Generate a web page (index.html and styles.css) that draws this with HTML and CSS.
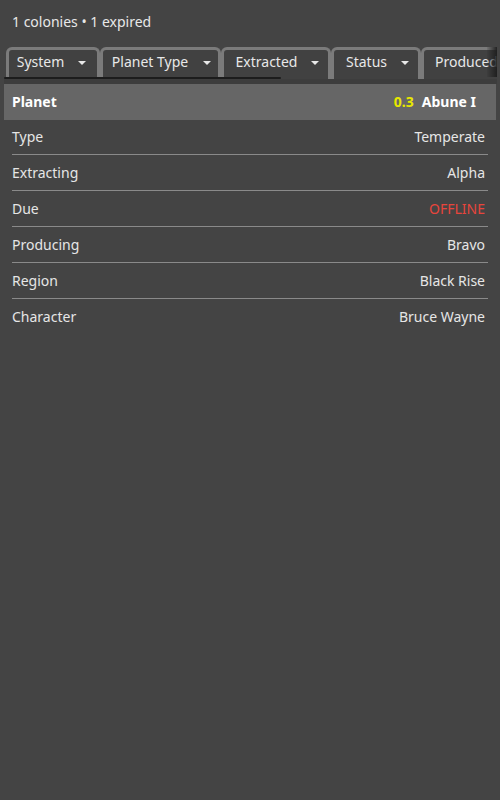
FILE: index.html
```html
<!DOCTYPE html>
<html>
<head>
<meta charset="utf-8">
<link rel="stylesheet" href="styles.css">
</head>
<body>
<div class="summary">1 colonies • 1 expired</div>
<div class="tabstrip">
  <div class="tabs">
    <div class="tab w1"><span class="label">System</span><span class="caret"></span></div>
    <div class="tab w2"><span class="label">Planet Type</span><span class="caret"></span></div>
    <div class="tab w3"><span class="label">Extracted</span><span class="caret"></span></div>
    <div class="tab w4"><span class="label">Status</span><span class="caret"></span></div>
    <div class="tab w5"><span class="label">Produced</span><span class="caret"></span></div>
  </div>
  <div class="fade"></div>
  <div class="scrollbar"></div>
</div>
<div class="header">
  <span class="htitle">Planet</span>
  <span class="hright"><span class="sec">0.3</span><span>Abune I</span></span>
</div>
<div class="rows">
  <div class="row"><span>Type</span><span>Temperate</span></div>
  <div class="row"><span>Extracting</span><span>Alpha</span></div>
  <div class="row"><span>Due</span><span class="offline">OFFLINE</span></div>
  <div class="row"><span>Producing</span><span>Bravo</span></div>
  <div class="row"><span>Region</span><span>Black Rise</span></div>
  <div class="row"><span>Character</span><span>Bruce Wayne</span></div>
</div>
</body>
</html>
```
FILE: styles.css
```css
html, body {
  margin: 0;
  padding: 0;
  background: #444444;
}
body {
  font-family: "Noto Sans", "Open Sans", sans-serif;
  font-size: 14px;
  color: #e8e8e8;
  width: 500px;
  height: 800px;
  overflow: hidden;
}
.summary {
  padding: 12px 12px 0;
  line-height: 20px;
  height: 20px;
}
.tabstrip {
  position: relative;
  margin: 15px 3px 0 4px;
  height: 37px;
  overflow: hidden;
  background: linear-gradient(#444444 0 32px, #3d3d3d 32px);
}
.tabs {
  display: flex;
  padding-left: 2px;
  width: 800px;
}
.tab {
  box-sizing: border-box;
  height: 32px;
  border: 3px solid #7b7b7b;
  border-bottom: none;
  border-radius: 6px 6px 0 0;
  background: #414141;
  display: flex;
  align-items: center;
  padding-bottom: 5px;
  flex: none;
}
.label {
  flex: 1;
  text-align: center;
  line-height: 20px;
  white-space: nowrap;
}
.caret {
  width: 0;
  height: 0;
  border-left: 4px solid transparent;
  border-right: 4px solid transparent;
  border-top: 4px solid #e8e8e8;
  margin-right: 9px;
  margin-top: 1px;
}
.w1 { width: 94px; }
.w1 .label { padding-right: 6px; }
.w1 .caret { margin-right: 11px; }
.w2 { width: 121px; }
.w2 .label { padding-right: 6px; }
.w2 .caret { margin-right: 7px; }
.w3 { width: 110px; }
.w3 .label { padding-right: 2px; }
.w4 { width: 90px; }
.w4 .label { padding-right: 2px; }
.w5 { width: 110px; }
.w5 .label { text-align: left; padding-left: 11px; }
.fade {
  position: absolute;
  right: 0;
  top: -5px;
  width: 10px;
  height: 35px;
  background: linear-gradient(to right, rgba(30,30,30,0.1), rgba(30,30,30,0.95));
}
.scrollbar {
  position: absolute;
  left: 0;
  top: 30px;
  width: 277px;
  height: 2px;
  border-radius: 1px;
  background: #1c1c1c;
}
.header {
  box-sizing: border-box;
  margin: 0 4px;
  height: 36px;
  background: #666666;
  display: flex;
  align-items: center;
  justify-content: space-between;
  padding: 0 20px 2px 8px;
  font-weight: bold;
  color: #ffffff;
}
.hright {
  display: flex;
  gap: 8px;
}
.sec {
  color: #e8e800;
}
.rows {
  margin: -1px 12px 0;
}
.row {
  height: 35px;
  border-bottom: 1px solid #8a8a8a;
  display: flex;
  align-items: center;
  justify-content: space-between;
  padding-right: 3px;
  color: #e6e6e6;
}
.row:last-child {
  border-bottom: none;
}
.offline {
  color: #e8453c;
}
```
